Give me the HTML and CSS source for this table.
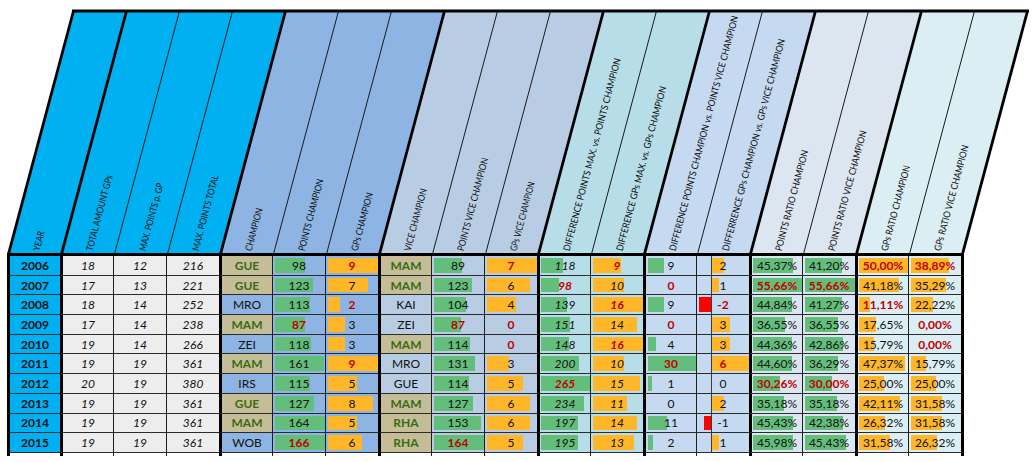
FILE: index.html
```html
<!DOCTYPE html>
<html lang="en">
<head>
<meta charset="utf-8">
<title>Champions statistics</title>
<link rel="stylesheet" href="styles.css">
</head>
<body>
<div class="sheet">
  <svg class="head" width="1035" height="253" viewBox="0 0 1035 253">
    <polygon class="g1" points="8.5,253 220.5,253 285.5,11 73.5,11"/>
    <polygon class="g2" points="220.5,253 379.5,253 444.5,11 285.5,11"/>
    <polygon class="g3" points="379.5,253 538.5,253 603.5,11 444.5,11"/>
    <polygon class="g4" points="538.5,253 644.5,253 709.5,11 603.5,11"/>
    <polygon class="g5" points="644.5,253 750.5,253 815.5,11 709.5,11"/>
    <polygon class="g6" points="750.5,253 856.5,253 921.5,11 815.5,11"/>
    <polygon class="g7" points="856.5,253 962.5,253 1027.5,11 921.5,11"/>
    <g class="thin">
      <line x1="114.5" y1="254" x2="179.5" y2="11"/>
      <line x1="167.5" y1="254" x2="232.5" y2="11"/>
      <line x1="273.5" y1="254" x2="338.5" y2="11"/>
      <line x1="326.5" y1="254" x2="391.5" y2="11"/>
      <line x1="432.5" y1="254" x2="497.5" y2="11"/>
      <line x1="485.5" y1="254" x2="550.5" y2="11"/>
      <line x1="591.5" y1="254" x2="656.5" y2="11"/>
      <line x1="697.5" y1="254" x2="762.5" y2="11"/>
      <line x1="803.5" y1="254" x2="868.5" y2="11"/>
      <line x1="909.5" y1="254" x2="974.5" y2="11"/>
    </g>
    <g class="thick">
      <line x1="8.5" y1="254" x2="73.5" y2="11"/>
      <line x1="61.5" y1="254" x2="126.5" y2="11"/>
      <line x1="220.5" y1="254" x2="285.5" y2="11"/>
      <line x1="379.5" y1="254" x2="444.5" y2="11"/>
      <line x1="538.5" y1="254" x2="603.5" y2="11"/>
      <line x1="644.5" y1="254" x2="709.5" y2="11"/>
      <line x1="750.5" y1="254" x2="815.5" y2="11"/>
      <line x1="856.5" y1="254" x2="921.5" y2="11"/>
      <line x1="962.5" y1="254" x2="1027.5" y2="11"/>
      <line x1="72" y1="11" x2="1029" y2="11"/>
    </g>
    <g class="labels">
      <text x="39.5" y="251.5" transform="rotate(-75.03 39.5 251.5)" textLength="20" lengthAdjust="spacingAndGlyphs">YEAR</text>
      <text x="92.5" y="251.5" transform="rotate(-75.03 92.5 251.5)" textLength="78" lengthAdjust="spacingAndGlyphs">TOTAL AMOUNT GPs</text>
      <text x="145.5" y="251.5" transform="rotate(-75.03 145.5 251.5)" textLength="70" lengthAdjust="spacingAndGlyphs">MAX. POINTS p. GP</text>
      <text x="198.5" y="251.5" transform="rotate(-75.03 198.5 251.5)" textLength="78" lengthAdjust="spacingAndGlyphs">MAX. POINTS TOTAL</text>
      <text x="251.5" y="251.5" transform="rotate(-75.03 251.5 251.5)" textLength="44" lengthAdjust="spacingAndGlyphs">CHAMPION</text>
      <text x="304.5" y="251.5" transform="rotate(-75.03 304.5 251.5)" textLength="74" lengthAdjust="spacingAndGlyphs">POINTS CHAMPION</text>
      <text x="357.5" y="251.5" transform="rotate(-75.03 357.5 251.5)" textLength="60" lengthAdjust="spacingAndGlyphs">GPs CHAMPION</text>
      <text x="410.5" y="251.5" transform="rotate(-75.03 410.5 251.5)" textLength="64" lengthAdjust="spacingAndGlyphs">VICE CHAMPION</text>
      <text x="463.5" y="251.5" transform="rotate(-75.03 463.5 251.5)" textLength="96" lengthAdjust="spacingAndGlyphs">POINTS VICE CHAMPION</text>
      <text x="516.5" y="251.5" transform="rotate(-75.03 516.5 251.5)" textLength="71" lengthAdjust="spacingAndGlyphs">GPs VICE CHAMPION</text>
      <text x="569.5" y="251.5" transform="rotate(-75.03 569.5 251.5)" textLength="199" lengthAdjust="spacingAndGlyphs">DIFFERENCE POINTS MAX. vs. POINTS CHAMPION</text>
      <text x="622.5" y="251.5" transform="rotate(-75.03 622.5 251.5)" textLength="170" lengthAdjust="spacingAndGlyphs">DIFFERENCE GPs MAX. vs. GPs CHAMPION</text>
      <text x="675.5" y="251.5" transform="rotate(-75.03 675.5 251.5)" textLength="243" lengthAdjust="spacingAndGlyphs">DIFFERENCE POINTS CHAMPION vs. POINTS VICE CHAMPION</text>
      <text x="728.5" y="251.5" transform="rotate(-75.03 728.5 251.5)" textLength="219" lengthAdjust="spacingAndGlyphs">DIFFERRENCE GPs CHAMPION vs. GPs VICE CHAMPION</text>
      <text x="781.5" y="251.5" transform="rotate(-75.03 781.5 251.5)" textLength="104" lengthAdjust="spacingAndGlyphs">POINTS RATIO CHAMPION</text>
      <text x="834.5" y="251.5" transform="rotate(-75.03 834.5 251.5)" textLength="124" lengthAdjust="spacingAndGlyphs">POINTS RATIO VICE CHAMPION</text>
      <text x="887.5" y="251.5" transform="rotate(-75.03 887.5 251.5)" textLength="88" lengthAdjust="spacingAndGlyphs">GPs RATIO CHAMPION</text>
      <text x="940.5" y="251.5" transform="rotate(-75.03 940.5 251.5)" textLength="109" lengthAdjust="spacingAndGlyphs">GPs RATIO VICE CHAMPION</text>
    </g>
  </svg>

  <div class="grid">
    <!-- 2006 -->
    <div class="cell tk yr">2006</div>
    <div class="cell tk gr">18</div>
    <div class="cell gr">12</div>
    <div class="cell gr">216</div>
    <div class="cell tk tan">GUE</div>
    <div class="cell b1 bar g" style="--w:30px">98</div>
    <div class="cell b1 bar o r" style="--w:50px">9</div>
    <div class="cell tk tan">MAM</div>
    <div class="cell b2 bar g" style="--w:28px">89</div>
    <div class="cell b2 bar o r" style="--w:50px">7</div>
    <div class="cell tk tq bar g" style="--w:22px">118</div>
    <div class="cell tq bar o r" style="--w:28px">9</div>
    <div class="cell tk b3 bar g c13" style="--w:16px">9</div>
    <div class="cell b3 ax o" style="--w:12px">2</div>
    <div class="cell tk b4 bar g" style="--w:40px">45,37%</div>
    <div class="cell b4 bar g" style="--w:37px">41,20%</div>
    <div class="cell tk b5 bar o r" style="--w:49px">50,00%</div>
    <div class="cell b5 bar o r" style="--w:38px">38,89%</div>
    <!-- 2007 -->
    <div class="cell tk yr">2007</div>
    <div class="cell tk gr">17</div>
    <div class="cell gr">13</div>
    <div class="cell gr">221</div>
    <div class="cell tk tan">GUE</div>
    <div class="cell b1 bar g" style="--w:38px">123</div>
    <div class="cell b1 bar o" style="--w:40px">7</div>
    <div class="cell tk tan">MAM</div>
    <div class="cell b2 bar g" style="--w:38px">123</div>
    <div class="cell b2 bar o" style="--w:43px">6</div>
    <div class="cell tk tq bar g r" style="--w:18px">98</div>
    <div class="cell tq bar o" style="--w:31px">10</div>
    <div class="cell tk b3 bar g c13 r" style="--w:0px">0</div>
    <div class="cell b3 ax o" style="--w:7px">1</div>
    <div class="cell tk b4 bar g r" style="--w:49px">55,66%</div>
    <div class="cell b4 bar g r" style="--w:50px">55,66%</div>
    <div class="cell tk b5 bar o" style="--w:40px">41,18%</div>
    <div class="cell b5 bar o" style="--w:35px">35,29%</div>
    <!-- 2008 -->
    <div class="cell tk yr">2008</div>
    <div class="cell tk gr">18</div>
    <div class="cell gr">14</div>
    <div class="cell gr">252</div>
    <div class="cell tk b1">MRO</div>
    <div class="cell b1 bar g" style="--w:35px">113</div>
    <div class="cell b1 bar o r" style="--w:12px">2</div>
    <div class="cell tk b2">KAI</div>
    <div class="cell b2 bar g" style="--w:32px">104</div>
    <div class="cell b2 bar o" style="--w:29px">4</div>
    <div class="cell tk tq bar g" style="--w:26px">139</div>
    <div class="cell tq bar o r" style="--w:50px">16</div>
    <div class="cell tk b3 bar g c13" style="--w:16px">9</div>
    <div class="cell b3 ax n r" style="--w:12px;--x:2px">-2</div>
    <div class="cell tk b4 bar g" style="--w:39px">44,84%</div>
    <div class="cell b4 bar g" style="--w:37px">41,27%</div>
    <div class="cell tk b5 bar o r" style="--w:11px">11,11%</div>
    <div class="cell b5 bar o" style="--w:22px">22,22%</div>
    <!-- 2009 -->
    <div class="cell tk yr">2009</div>
    <div class="cell tk gr">17</div>
    <div class="cell gr">14</div>
    <div class="cell gr">238</div>
    <div class="cell tk tan">MAM</div>
    <div class="cell b1 bar g r" style="--w:30px">87</div>
    <div class="cell b1 bar o" style="--w:17px">3</div>
    <div class="cell tk b2">ZEI</div>
    <div class="cell b2 bar g r" style="--w:27px">87</div>
    <div class="cell b2 bar o r" style="--w:0px">0</div>
    <div class="cell tk tq bar g" style="--w:29px">151</div>
    <div class="cell tq bar o" style="--w:44px">14</div>
    <div class="cell tk b3 bar g c13 r" style="--w:0px">0</div>
    <div class="cell b3 ax o" style="--w:18px">3</div>
    <div class="cell tk b4 bar g" style="--w:32px">36,55%</div>
    <div class="cell b4 bar g" style="--w:33px">36,55%</div>
    <div class="cell tk b5 bar o" style="--w:17px">17,65%</div>
    <div class="cell b5 bar o r" style="--w:0px">0,00%</div>
    <!-- 2010 -->
    <div class="cell tk yr">2010</div>
    <div class="cell tk gr">19</div>
    <div class="cell gr">14</div>
    <div class="cell gr">266</div>
    <div class="cell tk b1">ZEI</div>
    <div class="cell b1 bar g" style="--w:36px">118</div>
    <div class="cell b1 bar o" style="--w:17px">3</div>
    <div class="cell tk tan">MAM</div>
    <div class="cell b2 bar g" style="--w:36px">114</div>
    <div class="cell b2 bar o r" style="--w:0px">0</div>
    <div class="cell tk tq bar g" style="--w:28px">148</div>
    <div class="cell tq bar o r" style="--w:50px">16</div>
    <div class="cell tk b3 bar g c13" style="--w:8px">4</div>
    <div class="cell b3 ax o" style="--w:18px">3</div>
    <div class="cell tk b4 bar g" style="--w:39px">44,36%</div>
    <div class="cell b4 bar g" style="--w:38px">42,86%</div>
    <div class="cell tk b5 bar o" style="--w:15px">15,79%</div>
    <div class="cell b5 bar o r" style="--w:0px">0,00%</div>
    <!-- 2011 -->
    <div class="cell tk yr">2011</div>
    <div class="cell tk gr">19</div>
    <div class="cell gr">19</div>
    <div class="cell gr">361</div>
    <div class="cell tk tan">MAM</div>
    <div class="cell b1 bar g" style="--w:49px">161</div>
    <div class="cell b1 bar o r" style="--w:50px">9</div>
    <div class="cell tk b2">MRO</div>
    <div class="cell b2 bar g" style="--w:41px">131</div>
    <div class="cell b2 bar o" style="--w:22px">3</div>
    <div class="cell tk tq bar g" style="--w:38px">200</div>
    <div class="cell tq bar o" style="--w:31px">10</div>
    <div class="cell tk b3 bar g c13 r" style="--w:48px">30</div>
    <div class="cell b3 ax o r" style="--w:37px">6</div>
    <div class="cell tk b4 bar g" style="--w:39px">44,60%</div>
    <div class="cell b4 bar g" style="--w:33px">36,29%</div>
    <div class="cell tk b5 bar o" style="--w:46px">47,37%</div>
    <div class="cell b5 bar o" style="--w:15px">15,79%</div>
    <!-- 2012 -->
    <div class="cell tk yr">2012</div>
    <div class="cell tk gr">20</div>
    <div class="cell gr">19</div>
    <div class="cell gr">380</div>
    <div class="cell tk b1">IRS</div>
    <div class="cell b1 bar g" style="--w:35px">115</div>
    <div class="cell b1 bar o" style="--w:29px">5</div>
    <div class="cell tk b2">GUE</div>
    <div class="cell b2 bar g" style="--w:35px">114</div>
    <div class="cell b2 bar o" style="--w:36px">5</div>
    <div class="cell tk tq bar g r" style="--w:49px">265</div>
    <div class="cell tq bar o" style="--w:47px">15</div>
    <div class="cell tk b3 bar g c13" style="--w:4px">1</div>
    <div class="cell b3 ax o" style="--w:0px">0</div>
    <div class="cell tk b4 bar g r" style="--w:27px">30,26%</div>
    <div class="cell b4 bar g r" style="--w:27px">30,00%</div>
    <div class="cell tk b5 bar o" style="--w:25px">25,00%</div>
    <div class="cell b5 bar o" style="--w:25px">25,00%</div>
    <!-- 2013 -->
    <div class="cell tk yr">2013</div>
    <div class="cell tk gr">19</div>
    <div class="cell gr">19</div>
    <div class="cell gr">361</div>
    <div class="cell tk tan">GUE</div>
    <div class="cell b1 bar g" style="--w:39px">127</div>
    <div class="cell b1 bar o" style="--w:45px">8</div>
    <div class="cell tk tan">MAM</div>
    <div class="cell b2 bar g" style="--w:39px">127</div>
    <div class="cell b2 bar o" style="--w:43px">6</div>
    <div class="cell tk tq bar g" style="--w:43px">234</div>
    <div class="cell tq bar o" style="--w:34px">11</div>
    <div class="cell tk b3 bar g c13" style="--w:0px">0</div>
    <div class="cell b3 ax o" style="--w:12px">2</div>
    <div class="cell tk b4 bar g" style="--w:31px">35,18%</div>
    <div class="cell b4 bar g" style="--w:32px">35,18%</div>
    <div class="cell tk b5 bar o" style="--w:41px">42,11%</div>
    <div class="cell b5 bar o" style="--w:31px">31,58%</div>
    <!-- 2014 -->
    <div class="cell tk yr">2014</div>
    <div class="cell tk gr">19</div>
    <div class="cell gr">19</div>
    <div class="cell gr">361</div>
    <div class="cell tk tan">MAM</div>
    <div class="cell b1 bar g" style="--w:50px">164</div>
    <div class="cell b1 bar o" style="--w:29px">5</div>
    <div class="cell tk tan">RHA</div>
    <div class="cell b2 bar g" style="--w:47px">153</div>
    <div class="cell b2 bar o" style="--w:43px">6</div>
    <div class="cell tk tq bar g" style="--w:37px">197</div>
    <div class="cell tq bar o" style="--w:44px">14</div>
    <div class="cell tk b3 bar g c13" style="--w:19px">11</div>
    <div class="cell b3 ax n" style="--w:7px;--x:7px">-1</div>
    <div class="cell tk b4 bar g" style="--w:40px">45,43%</div>
    <div class="cell b4 bar g" style="--w:38px">42,38%</div>
    <div class="cell tk b5 bar o" style="--w:26px">26,32%</div>
    <div class="cell b5 bar o" style="--w:31px">31,58%</div>
    <!-- 2015 -->
    <div class="cell tk yr">2015</div>
    <div class="cell tk gr">19</div>
    <div class="cell gr">19</div>
    <div class="cell gr">361</div>
    <div class="cell tk b1">WOB</div>
    <div class="cell b1 bar g r" style="--w:50px">166</div>
    <div class="cell b1 bar o" style="--w:34px">6</div>
    <div class="cell tk tan">RHA</div>
    <div class="cell b2 bar g r" style="--w:50px">164</div>
    <div class="cell b2 bar o" style="--w:36px">5</div>
    <div class="cell tk tq bar g" style="--w:37px">195</div>
    <div class="cell tq bar o" style="--w:41px">13</div>
    <div class="cell tk b3 bar g c13" style="--w:5px">2</div>
    <div class="cell b3 ax o" style="--w:7px">1</div>
    <div class="cell tk b4 bar g" style="--w:40px">45,98%</div>
    <div class="cell b4 bar g" style="--w:41px">45,43%</div>
    <div class="cell tk b5 bar o" style="--w:31px">31,58%</div>
    <div class="cell b5 bar o" style="--w:26px">26,32%</div>
    <!-- partial next row -->
    <div class="cell tk end"></div><div class="cell tk end"></div><div class="cell end"></div><div class="cell end"></div>
    <div class="cell tk end"></div><div class="cell end"></div><div class="cell end"></div>
    <div class="cell tk end"></div><div class="cell end"></div><div class="cell end"></div>
    <div class="cell tk end"></div><div class="cell end"></div>
    <div class="cell tk end"></div><div class="cell end"></div>
    <div class="cell tk end"></div><div class="cell end"></div>
    <div class="cell tk end"></div><div class="cell end"></div>
  </div>
</div>
</body>
</html>
```

FILE: styles.css
```css
* { box-sizing: border-box; }

html, body {
  margin: 0;
  padding: 0;
  background: #ffffff;
}

body {
  font-family: Lato, "Open Sans", "Liberation Sans", sans-serif;
  width: 1035px;
  height: 462px;
  overflow: hidden;
}

/* ---------- slanted header ---------- */
.head { display: block; }
.head .g1 { fill: #00b0f0; }
.head .g2 { fill: #8db4e2; }
.head .g3 { fill: #b8cce4; }
.head .g4 { fill: #b7dee8; }
.head .g5 { fill: #c5d9f1; }
.head .g6 { fill: #dce6f1; }
.head .g7 { fill: #daeef3; }
.head .thin line { stroke: #1a1a1a; stroke-width: 1; }
.head .thick line { stroke: #000000; stroke-width: 2.8; }
.head .labels text {
  font-family: Lato, "Open Sans", sans-serif;
  font-size: 9.5px;
  fill: #0d0d0d;
}

/* ---------- data grid ---------- */
.grid {
  display: grid;
  grid-template-columns: repeat(18, 53px);
  grid-template-rows: repeat(10, 19.7px) 3px;
  width: 957px;
  margin-left: 7px;
  border-top: 3px solid #000000;
  border-right: 3px solid #000000;
}

.cell {
  display: flex;
  align-items: center;
  justify-content: center;
  border-left: 1px solid #1e1e1e;
  border-bottom: 1px solid #2b2b2b;
  font-size: 12px;
  line-height: 1;
  padding-top: 1px;
  color: #111111;
  white-space: nowrap;
}
.tk { border-left: 3px solid #000000; }
.end { border-bottom: 0; background: #ffffff; }

/* column fills */
.yr  { background-color: #00b0f0; font-weight: 700; }
.gr  { background-color: #ededed; font-style: italic; }
.b1  { background-color: #8db4e2; }
.b2  { background-color: #b8cce4; }
.tq  { background-color: #b7dee8; font-style: italic; }
.b3  { background-color: #c5d9f1; }
.b4  { background-color: #dce6f1; }
.b5  { background-color: #daeef3; }
.tan { background-color: #c4bd97; color: #3a6b14; font-weight: 700; }

/* highlighted values */
.r { color: #c00000; font-weight: 700; }

/* data bars */
.g { --bc: #63be7b; }
.o { --bc: #ffb628; }
.n { --bc: #ff0000; }

.bar {
  background-image: linear-gradient(var(--bc), var(--bc));
  background-repeat: no-repeat;
  background-position: var(--x, 2px) 50%;
  background-size: var(--w, 0px) calc(100% - 4px);
}
.tk.bar { --x: 1px; }
.tk.bar.c13 { --x: 2px; }

/* bars with a zero axis (negative values to the left) */
.ax {
  background-image: linear-gradient(var(--bc), var(--bc)), linear-gradient(#3a3a3a, #3a3a3a);
  background-repeat: no-repeat;
  background-position: var(--x, 15px) 50%, 14px 0;
  background-size: var(--w, 0px) calc(100% - 4px), 1px 100%;
}
```
